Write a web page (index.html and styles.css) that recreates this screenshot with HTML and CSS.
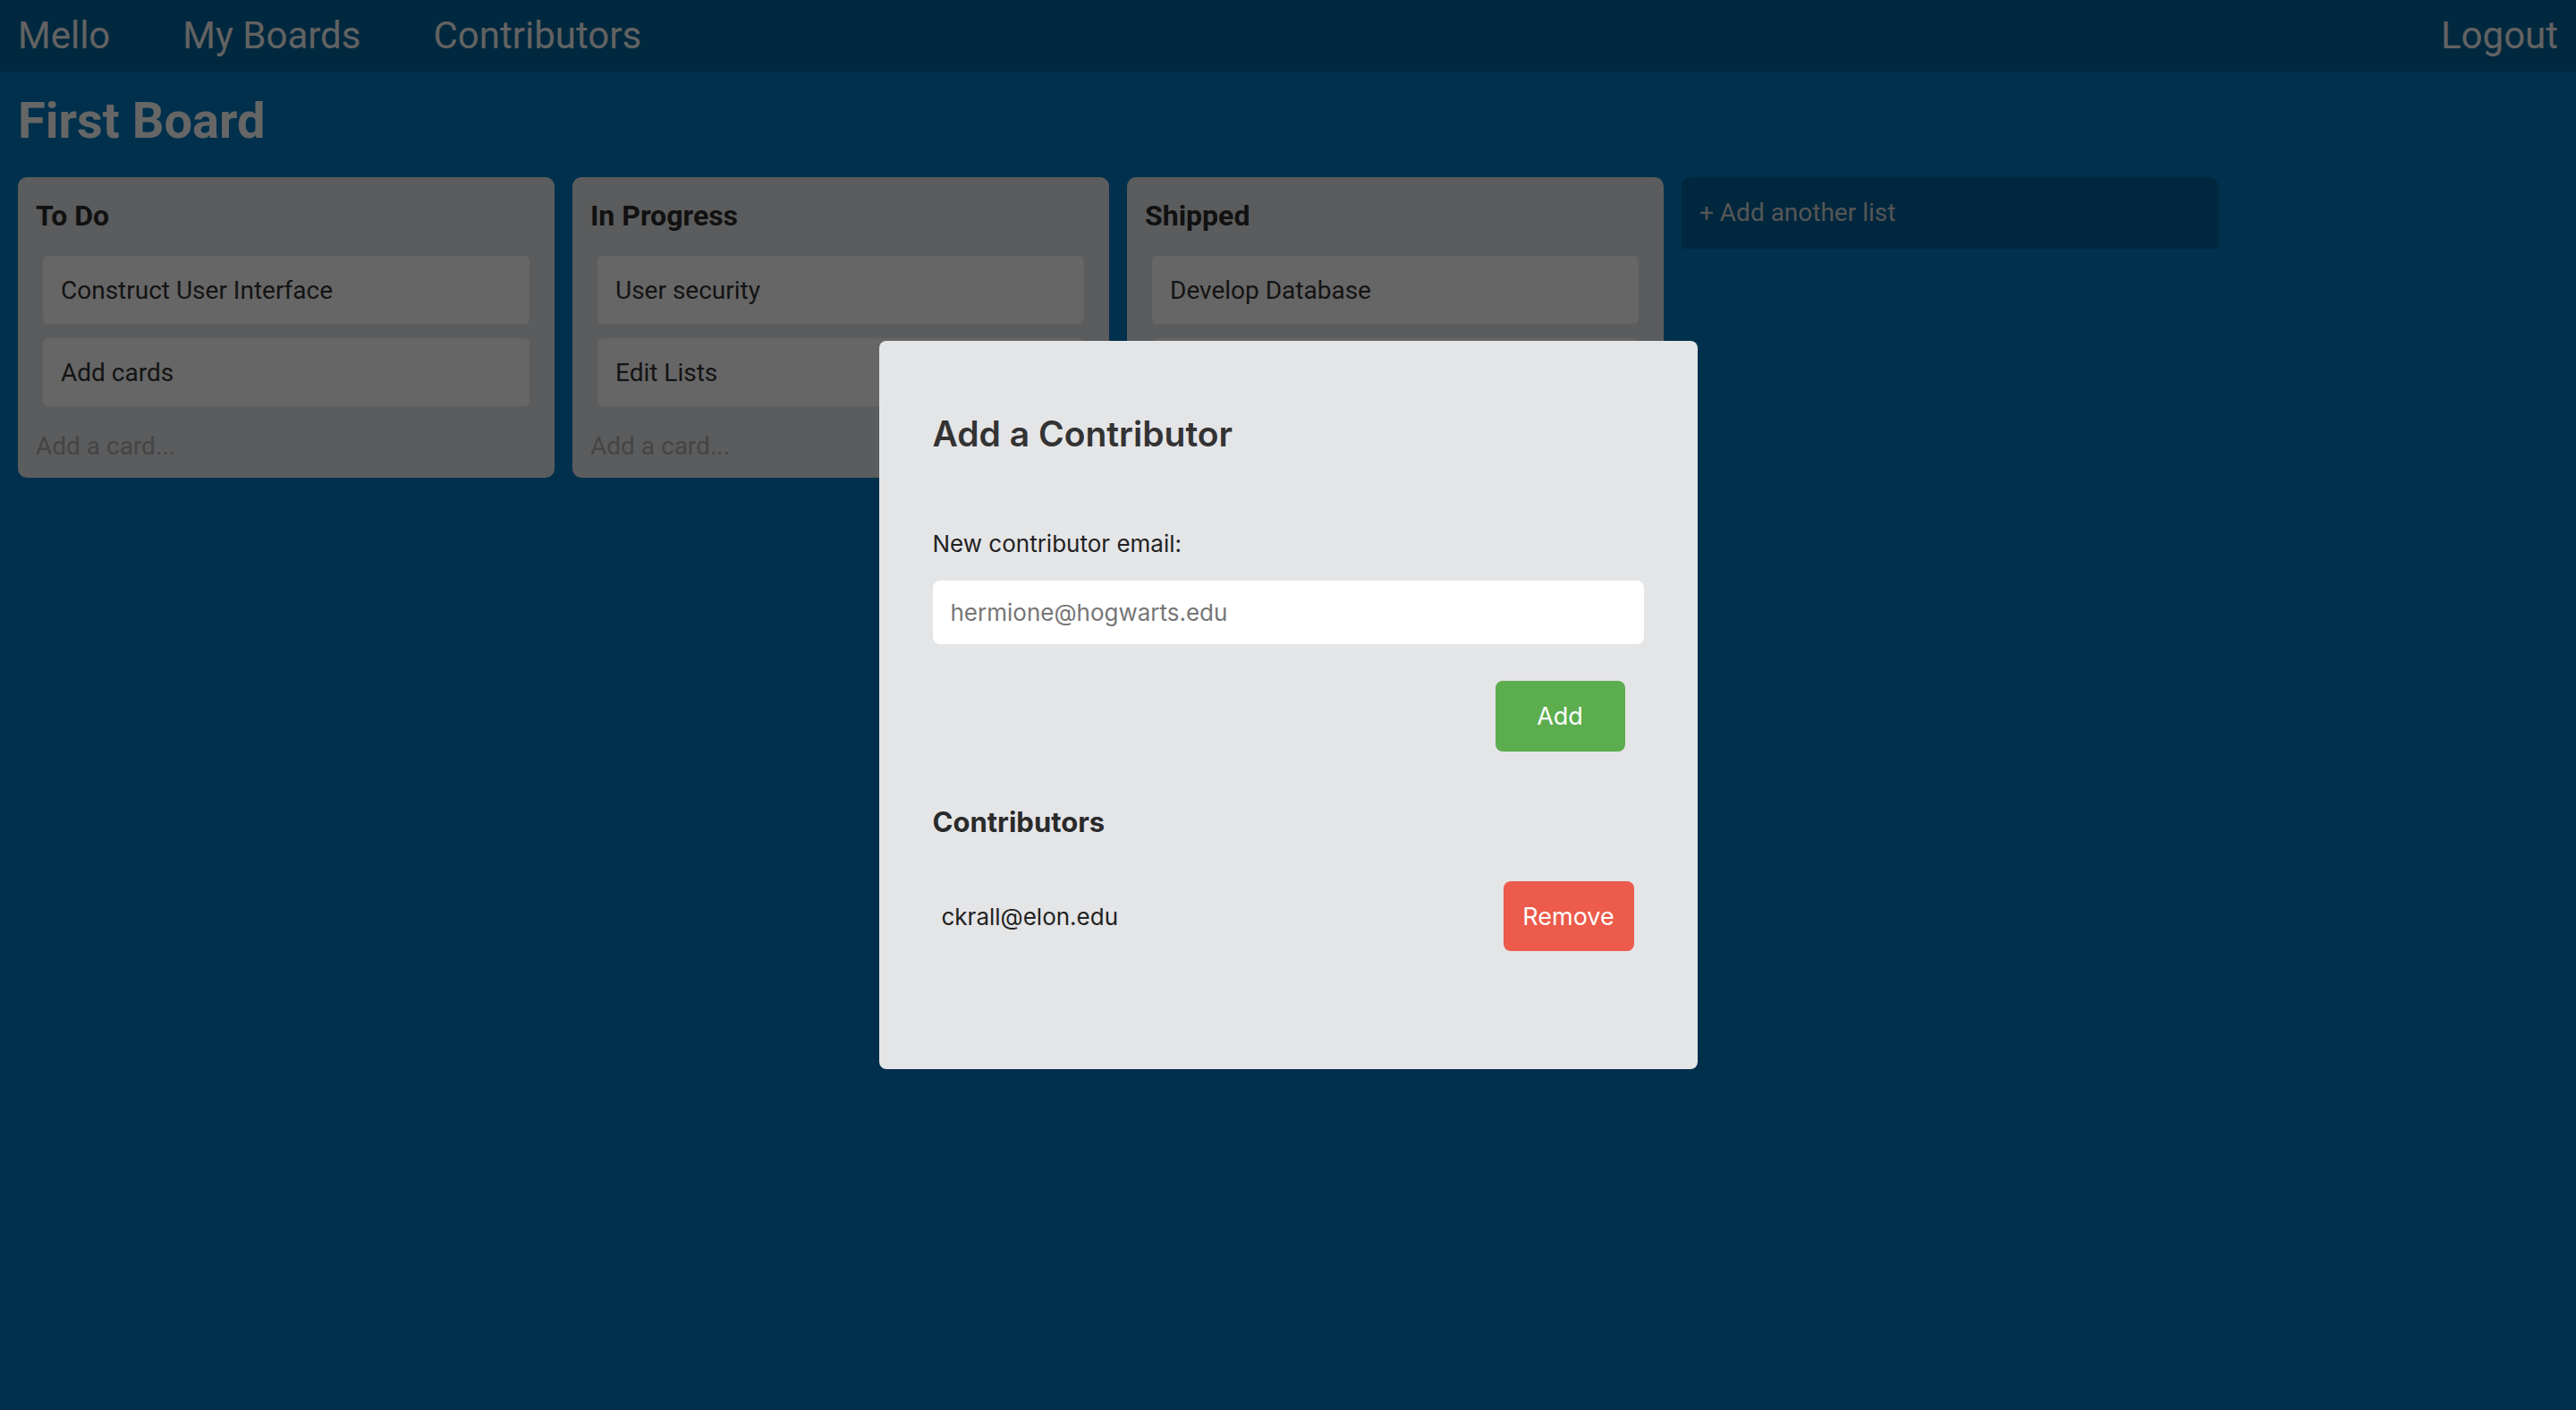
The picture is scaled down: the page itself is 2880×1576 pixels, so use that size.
FILE: index.html
```html
<!DOCTYPE html>
<html lang="en">
<head>
<meta charset="utf-8">
<title>Mello - First Board</title>
<link rel="stylesheet" href="styles.css">
</head>
<body>
<nav class="topnav">
  <a class="nav-link" href="#">Mello</a>
  <a class="nav-link" href="#">My Boards</a>
  <a class="nav-link" href="#">Contributors</a>
  <a class="nav-link nav-logout" href="#">Logout</a>
</nav>
<main class="board">
  <h1 class="board-title">First Board</h1>
  <div class="lists">
    <section class="list">
      <h2 class="list-title">To Do</h2>
      <div class="card">Construct User Interface</div>
      <div class="card">Add cards</div>
      <div class="add-card">Add a card...</div>
    </section>
    <section class="list">
      <h2 class="list-title">In Progress</h2>
      <div class="card">User security</div>
      <div class="card">Edit Lists</div>
      <div class="add-card">Add a card...</div>
    </section>
    <section class="list">
      <h2 class="list-title">Shipped</h2>
      <div class="card">Develop Database</div>
      <div class="card">Create Boards</div>
      <div class="add-card">Add a card...</div>
    </section>
    <div class="add-list">+ Add another list</div>
  </div>
</main>
<div class="overlay">
  <div class="modal">
    <h2 class="modal-title">Add a Contributor</h2>
    <label class="modal-label" for="email">New contributor email:</label>
    <input class="modal-input" id="email" type="text" placeholder="hermione@hogwarts.edu">
    <div class="add-row">
      <button class="btn btn-add" type="button">Add</button>
    </div>
    <h3 class="contrib-title">Contributors</h3>
    <div class="contrib-row">
      <span class="contrib-email">ckrall@elon.edu</span>
      <button class="btn btn-remove" type="button">Remove</button>
    </div>
  </div>
</div>
</body>
</html>
```

FILE: styles.css
```css
* { box-sizing: border-box; }

html, body {
  margin: 0;
  padding: 0;
  height: 100%;
}

body {
  background: #0079bf;
  font-family: Roboto, "Liberation Sans", sans-serif;
  min-height: 1576px;
}

.topnav {
  display: flex;
  align-items: center;
  gap: 81px;
  height: 80px;
  padding: 0 20px;
  background: #00659c;
}

.nav-link {
  color: #f6f6f6;
  text-decoration: none;
  font-size: 42px;
  line-height: 80px;
}

.nav-logout { margin-left: auto; }

.board {
  padding: 0 20px;
}

.board-title {
  margin: 20px 0 28px;
  font-size: 56px;
  line-height: 70px;
  font-weight: 700;
  color: #ffffff;
}

.lists {
  display: flex;
  align-items: flex-start;
  gap: 20px;
}

.list {
  width: 600px;
  flex: none;
  background: #e4e6e9;
  border-radius: 10px;
  padding: 20px 20px 15px;
}

.list-title {
  margin: 0 0 22px;
  font-size: 32px;
  line-height: 46px;
  font-weight: 700;
  color: #2b2b2b;
}

.card {
  margin: 0 8px 16px;
  height: 76px;
  padding: 0 20px;
  background: #ffffff;
  border-radius: 6px;
  font-size: 28px;
  line-height: 78px;
  color: #333333;
}

.card + .card { margin-bottom: 0; }

.add-card {
  margin-top: 25px;
  font-size: 28px;
  line-height: 40px;
  color: #acacac;
}

.add-list {
  width: 600px;
  flex: none;
  height: 80px;
  padding: 0 20px;
  background: #006199;
  border-radius: 10px 10px 0 0;
  font-size: 28px;
  line-height: 80px;
  color: #d8d8d8;
}

.overlay {
  position: fixed;
  inset: 0;
  background: rgba(0, 0, 0, 0.6);
  display: flex;
  align-items: center;
  justify-content: center;
}

.modal {
  width: 915px;
  background: #e4e5e7;
  border-radius: 8px;
  padding: 80px 60px 132px;
  font-family: Inter, "Noto Sans", sans-serif;
  display: flex;
  flex-direction: column;
}

.modal-title {
  margin: 0;
  font-size: 39px;
  line-height: 48px;
  font-weight: 600;
  color: #333333;
}

.modal-label {
  margin-top: 81px;
  font-size: 26px;
  line-height: 36px;
  color: #222222;
}

.modal-input {
  margin-top: 23px;
  height: 71px;
  width: 100%;
  border: none;
  border-radius: 8px;
  background: #ffffff;
  padding: 0 20px;
  font-family: Inter, "Noto Sans", sans-serif;
  font-size: 26px;
  color: #222;
  outline: none;
}

.modal-input::placeholder { color: #767676; }

.add-row {
  margin-top: 41px;
  display: flex;
  justify-content: flex-end;
  padding-right: 21px;
}

.btn {
  border: none;
  border-radius: 8px;
  color: #ffffff;
  font-family: Inter, "Noto Sans", sans-serif;
  font-size: 27px;
  cursor: pointer;
}

.btn-add {
  width: 145px;
  height: 79px;
  background: #5cad4e;
}

.contrib-title {
  margin: 59px 0 0;
  font-size: 31px;
  line-height: 40px;
  font-weight: 700;
  color: #2a2a2a;
}

.contrib-row {
  margin-top: 46px;
  display: flex;
  align-items: center;
  justify-content: space-between;
  padding: 0 11px 0 10px;
}

.contrib-email {
  font-size: 26px;
  color: #222222;
}

.btn-remove {
  width: 146px;
  height: 78px;
  background: #ec5b4b;
}
```
